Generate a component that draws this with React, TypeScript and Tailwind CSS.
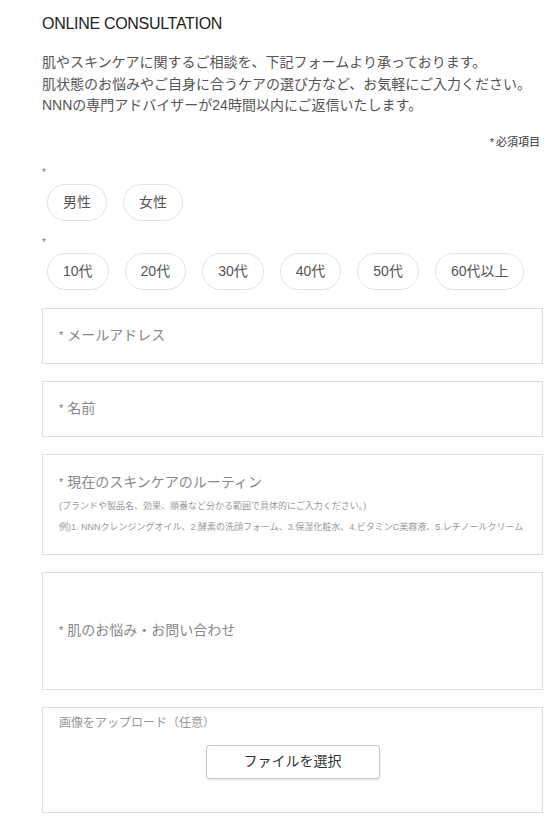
const font = 'font-["Liberation_Sans","Noto_Sans_CJK_JP",sans-serif]'

function Pill({ label }: { label: string }) {
  return (
    <button
      type="button"
      className="h-[37px] px-[15px] rounded-full border border-[#e2e2e2] bg-white text-[14px] leading-none text-[#555]"
    >
      {label}
    </button>
  )
}

function Star() {
  return <span className="text-[11px] text-[#777] mr-[4px] align-[1px]">*</span>
}

export default function App() {
  const ages = ['10代', '20代', '30代', '40代', '50代', '60代以上']

  return (
    <div className={`${font} bg-white w-[557px] min-h-[829px] pl-[42px] pr-[14px] pt-[14px]`}>
      <h1 className="text-[16px] leading-[20px] text-[#222] tracking-[-0.3px]">ONLINE CONSULTATION</h1>

      <p className="mt-[18px] text-[14px] leading-[21.5px] text-[#555]">
        肌やスキンケアに関するご相談を、下記フォームより承っております。
        <br />
        肌状態のお悩みやご自身に合うケアの選び方など、お気軽にご入力ください。
        <br />
        NNNの専門アドバイザーが24時間以内にご返信いたします。
      </p>

      <p className="mt-[17px] text-right text-[11px] leading-[16px] text-[#333] pr-[3px]">
        <span className="mr-[2px]">*</span>必須項目
      </p>

      {/* gender */}
      <div className="mt-[17px] text-[10px] leading-[12px] text-[#777]">*</div>
      <div className="mt-[5px] ml-[5px] flex gap-4">
        <Pill label="男性" />
        <Pill label="女性" />
      </div>

      {/* age */}
      <div className="mt-[16px] text-[10px] leading-[12px] text-[#777]">*</div>
      <div className="mt-[4px] ml-[5px] flex gap-4">
        {ages.map((a) => (
          <Pill key={a} label={a} />
        ))}
      </div>

      <div className="mt-[18px] flex flex-col gap-[17px]">
        <div className="h-[56px] border border-[#dedede] flex items-center px-[16px] text-[14px] text-[#888]">
          <Star />メールアドレス
        </div>

        <div className="h-[56px] border border-[#dedede] flex items-center px-[16px] text-[14px] text-[#888]">
          <Star />名前
        </div>

        <div className="h-[101px] border border-[#dedede] px-[16px] pt-[16px]">
          <div className="text-[14px] leading-[22px] text-[#888]">
            <Star />現在のスキンケアのルーティン
          </div>
          <div className="mt-[7px] text-[9px] leading-[12px] text-[#999]">
            (ブランドや製品名、効果、順番など分かる範囲で具体的にご入力ください。)
          </div>
          <div className="mt-[9px] text-[9px] leading-[12px] text-[#999]">
            例)1. NNNクレンジングオイル、2.酵素の洗顔フォーム、3.保湿化粧水、4.ビタミンC美容液、5.レチノールクリーム
          </div>
        </div>

        <div className="h-[118px] border border-[#dedede] flex items-center px-[16px] text-[14px] text-[#888]">
          <Star />肌のお悩み・お問い合わせ
        </div>

        <div className="h-[106px] border border-[#dedede] px-[16px] pt-[7px]">
          <div className="text-[12px] leading-[16px] text-[#999]">画像をアップロード（任意）</div>
          <div className="mt-[14px] flex justify-center">
            <button
              type="button"
              className="w-[174px] h-[34px] border border-[#c8c8c8] rounded-[3px] bg-white shadow-[0_1px_2px_rgba(0,0,0,0.12)] text-[14px] text-[#333]"
            >
              ファイルを選択
            </button>
          </div>
        </div>
      </div>
    </div>
  )
}
